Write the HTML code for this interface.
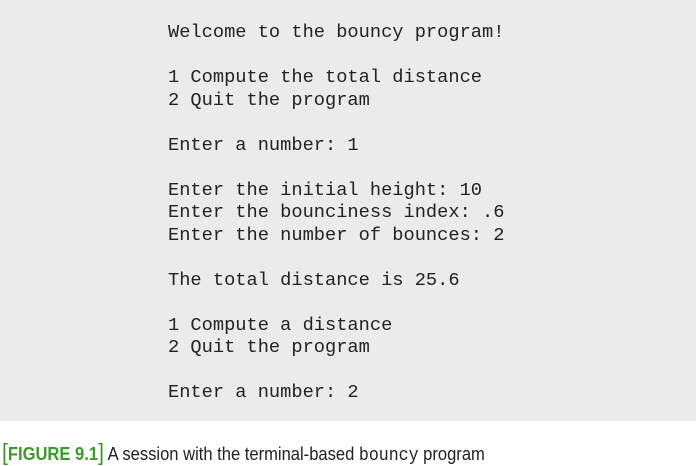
<!DOCTYPE html>
<html><head><style>
body{margin:0;width:696px;height:461px;background:#fff;overflow:hidden}
.box{position:absolute;left:0;top:0;width:696px;height:421px;background:#ebebeb}
pre{position:absolute;left:168px;top:21px;margin:0;font-family:"Liberation Mono",monospace;font-size:18.7px;line-height:22.5px;color:#222}
.cap{position:absolute;left:2px;top:439px;font-family:"Liberation Sans",sans-serif;font-size:18px;color:#222;white-space:nowrap;transform:scaleX(0.92);transform-origin:left top}
.g{color:#3a9a2a;font-weight:bold}
.b{font-size:23px;font-weight:normal}
.m{font-family:"Liberation Mono",monospace;font-size:18px}
</style></head><body>
<div class="box"></div>
<pre>Welcome to the bouncy program!

1 Compute the total distance
2 Quit the program

Enter a number: 1

Enter the initial height: 10
Enter the bounciness index: .6
Enter the number of bounces: 2

The total distance is 25.6

1 Compute a distance
2 Quit the program

Enter a number: 2</pre>
<div class="cap"><span class="g"><span class="b">[</span>FIGURE 9.1<span class="b">]</span></span> A session with the terminal-based <span class="m">bouncy</span> program</div>
</body></html>
